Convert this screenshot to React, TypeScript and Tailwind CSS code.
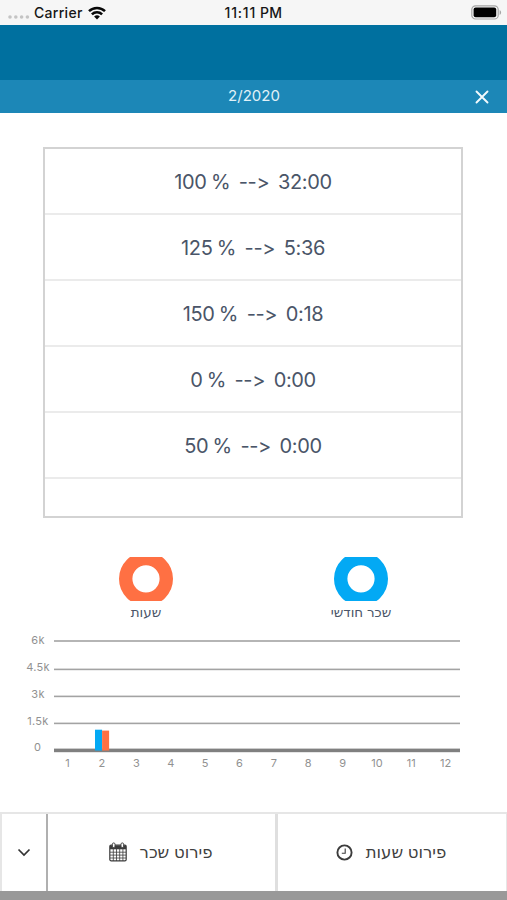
const rows = [
  { rate: '100 %', time: '32:00' },
  { rate: '125 %', time: '5:36' },
  { rate: '150 %', time: '0:18' },
  { rate: '0 %', time: '0:00' },
  { rate: '50 %', time: '0:00' },
];

const gridLines = [
  { label: '6k', y: 21, labelY: 23.6 },
  { label: '4.5k', y: 49.4, labelY: 50.6 },
  { label: '3k', y: 76.4, labelY: 77.6 },
  { label: '1.5k', y: 103.4, labelY: 104.6 },
];

const months = [1, 2, 3, 4, 5, 6, 7, 8, 9, 10, 11, 12];

function StatusBar() {
  return (
    <div className="grid h-[25px] grid-cols-3 items-center bg-[#f6f6f6] text-[14px] font-medium text-[#161616]">
      <div className="flex items-center pl-[8px]">
        <svg width="22" height="6" viewBox="0 0 22 6" fill="#c4c4c4" className="mt-[8px]">
          <circle cx="2" cy="3" r="1.8" />
          <circle cx="7.8" cy="3" r="1.8" />
          <circle cx="13.6" cy="3" r="1.8" />
          <circle cx="19.4" cy="3" r="1.8" />
        </svg>
        <span className="ml-[4px] w-[49px] whitespace-nowrap tracking-[0.3px]">Carrier</span>
        <svg width="18" height="14" viewBox="0 0 18 14" fill="none" stroke="#080808" strokeWidth="2.5" className="ml-[5px]">
          <path d="M1 5.2a11.4 11.4 0 0 1 16 0" />
          <path d="M3.9 8.3a7.2 7.2 0 0 1 10.2 0" />
          <path d="M9 13.5 6.1 10.6a4.1 4.1 0 0 1 5.8 0z" fill="#080808" stroke="none" />
        </svg>
      </div>
      <div className="text-center tracking-[0.8px] whitespace-nowrap">
        <span>11:11</span><span className="tracking-[0.3px]"> PM</span>
      </div>
      <div className="flex justify-end pr-[5px]">
        <svg width="31" height="15" viewBox="0 0 31 15">
          <rect x="0.8" y="0.8" width="26.4" height="13.2" rx="3.8" fill="#f6f6f6" stroke="#a5a5a5" strokeWidth="1.2" />
          <rect x="2.6" y="2.6" width="22.6" height="9.6" rx="2" fill="#000" />
          <path d="M28.6 5v5c2-1 2-4 0-5z" fill="#a5a5a5" />
        </svg>
      </div>
    </div>
  );
}

function Donut({ color, label }: { color: string; label: string }) {
  return (
    <div className="flex w-[100px] flex-col items-center">
      <svg width="54" height="44" viewBox="0 0 54 44" fill="none" stroke={color} strokeWidth="13.4" className="shrink-0">
        <circle cx="27" cy="21.8" r="20.3" />
      </svg>
      <span dir="rtl" className="mt-[1px] text-[13.5px] leading-[20px] whitespace-nowrap text-[#4a5568]">{label}</span>
    </div>
  );
}

function Chart() {
  return (
    <svg width="507" height="160" viewBox="0 0 507 160" fontSize="11" fill="#919191" textAnchor="middle" className="block">
      {gridLines.map((g) => (
        <g key={g.label}>
          <text x="38" y={g.labelY} letterSpacing="0.3">{g.label}</text>
          <rect x="54" y={g.y - 0.8} width="406" height="1.6" fill="#a3a3a3" />
        </g>
      ))}
      <text x="37.5" y="131.4">0</text>
      <rect x="54" y="128.6" width="406" height="3.6" fill="#808080" />
      <rect x="95" y="109.7" width="7.1" height="20.8" fill="#03a9f4" />
      <rect x="102.1" y="110.6" width="7" height="19.9" fill="#ff7043" />
      {months.map((m, i) => (
        <text key={m} x={67.6 + i * 34.37} y="146.6">{m}</text>
      ))}
    </svg>
  );
}

function CalendarIcon() {
  return (
    <svg width="18" height="20" viewBox="0 0 18 20" fill="none" stroke="#3c3c3c" className="mb-[2px]">
      <rect x="0.8" y="3.2" width="16.4" height="15.6" rx="1.3" strokeWidth="1.2" />
      <path d="M1 3.5h16v3.8H1z" fill="#3c3c3c" stroke="none" />
      <path d="M4.3 7v12M7.5 7v12M10.7 7v12M13.9 7v12M1 10.2h16M1 13.1h16M1 16h16" strokeWidth="0.8" />
      <rect x="3.4" y="0.9" width="2.6" height="4.6" rx="1.3" fill="#fff" strokeWidth="0.9" />
      <rect x="12" y="0.9" width="2.6" height="4.6" rx="1.3" fill="#fff" strokeWidth="0.9" />
    </svg>
  );
}

function ClockIcon() {
  return (
    <svg width="17" height="17" viewBox="0 0 17 17" fill="none" stroke="#3c3c3c" className="mb-[1px]">
      <circle cx="8.5" cy="8.5" r="7.1" strokeWidth="1.9" />
      <path d="M9.2 4.6v4.6H5.8" strokeWidth="1.1" />
    </svg>
  );
}

export default function App() {
  return (
    <div className="flex h-[900px] w-[507px] flex-col overflow-hidden bg-white font-['Inter','DejaVu_Sans',sans-serif] [font-feature-settings:'calt'_0]">
      <StatusBar />
      <div className="h-[55px] bg-[#00709f]" />
      <div className="grid h-[33px] grid-cols-3 items-center bg-[#1c87b7] text-[#e0f1f8]">
        <div />
        <div className="pb-[1px] pl-[1px] text-center text-[15px]">2/2020</div>
        <svg width="14" height="14" viewBox="0 0 14 14" stroke="#f2fafd" strokeWidth="1.9" strokeLinecap="round" className="mr-[18px] justify-self-end">
          <path d="M1.5 1.5l11 11M12.5 1.5l-11 11" />
        </svg>
      </div>

      {/* Hours by rate */}
      <div className="mt-[34px] ml-[43px] h-[371px] w-[420px] border-2 border-[#d3d3d3]">
        {rows.map((r) => (
          <div key={r.rate} className="flex h-[66px] items-center justify-center border-b-2 border-[#ebebeb] pt-[2px] text-[20px] tracking-[-0.35px] text-[#4a5568] [word-spacing:-1px]">
            <span className="whitespace-pre">{r.rate}  --&gt;  {r.time}</span>
          </div>
        ))}
      </div>

      <div className="mt-[39px] flex h-[63px] justify-between pr-[96px] pl-[96px]">
        <Donut color="#ff7043" label="שעות" />
        <Donut color="#03a9f4" label="שכר חודשי" />
      </div>

      <Chart />

      {/* Bottom actions */}
      <div className="mt-auto flex h-[79px] border-t-2 border-l-2 border-r border-[#e6e6e6] text-[16.5px] text-[#404040]">
        <div className="flex w-[46px] items-center justify-center border-r-2 border-[#b0b0b0]">
          <svg width="14" height="9" viewBox="0 0 14 9" fill="none" stroke="#333" strokeWidth="1.7">
            <path d="M1.5 1.5 7 7l5.500-5.500" />
          </svg>
        </div>
        <div className="flex w-[230px] items-center justify-center border-r-[3px] border-[#dfdfdf] pr-[2px]">
          <CalendarIcon />
          <span dir="rtl" className="ml-[13px]">פירוט שכר</span>
        </div>
        <div className="flex flex-1 items-center justify-center pr-[2px]">
          <ClockIcon />
          <span dir="rtl" className="ml-[13px]">פירוט שעות</span>
        </div>
      </div>
      <div className="h-[9px] bg-[#999]" />
    </div>
  );
}
